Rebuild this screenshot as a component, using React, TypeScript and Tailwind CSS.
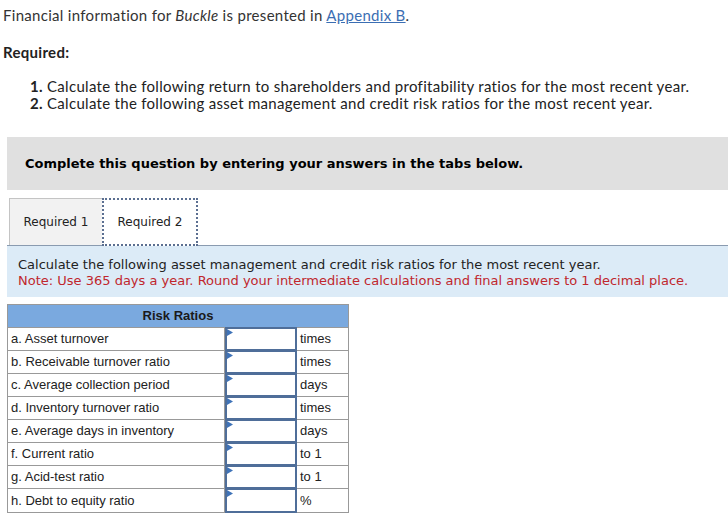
import React from "react";

const rows: [string, string][] = [
  ["a. Asset turnover", "times"],
  ["b. Receivable turnover ratio", "times"],
  ["c. Average collection period", "days"],
  ["d. Inventory turnover ratio", "times"],
  ["e. Average days in inventory", "days"],
  ["f. Current ratio", "to 1"],
  ["g. Acid-test ratio", "to 1"],
  ["h. Debt to equity ratio", "%"],
];

export default function App() {
  return (
    <div className="w-[728px] h-[520px] bg-white overflow-hidden text-[#333]">
      <div className="font-['Lato',sans-serif] text-[15px] tracking-[0.3px]">
        <p className="pl-[3px] pt-[6px] leading-[18px]">
          Financial information for <i>Buckle</i> is presented in{" "}
          <span className="text-[#3b6eb3] underline">Appendix B</span>.
        </p>
        <p className="pl-[3px] mt-[19px] leading-[18px] font-bold text-[#222]">Required:</p>
        <div className="pl-[30px] mt-[17px] leading-[17px] text-[#222]">
          <p>
            <b>1.</b> Calculate the following return to shareholders and profitability ratios for the most recent year.
          </p>
          <p>
            <b>2.</b> Calculate the following asset management and credit risk ratios for the most recent year.
          </p>
        </div>
      </div>

      <div className="font-['DejaVu_Sans',sans-serif]">
        <div className="ml-[7px] mt-[25px] h-[53px] bg-[#e0e0e0] flex items-center pl-[18px]">
          <span className="text-[13px] font-bold text-black">
            Complete this question by entering your answers in the tabs below.
          </span>
        </div>

        <div className="mt-[7px] ml-[7px] flex items-end h-[49px] border-b border-[#8a9bb0]">
          <div className="ml-[2px] w-[93px] h-[47px] bg-[#f2f2f2] border-t border-l border-[#c4c4c4] flex items-center justify-center text-[12px] text-[#222]">
            Required 1
          </div>
          <div className="w-[96px] h-[48px] bg-white border-2 border-dotted border-[#5b6f91] flex items-center justify-center text-[12px] text-[#222] -mb-px">
            Required 2
          </div>
        </div>

        <div className="ml-[7px] h-[51px] bg-[#dcebf7] pl-[11px] pt-[11px] text-[13px] leading-[16px]">
          <p className="text-[#222]">
            Calculate the following asset management and credit risk ratios for the most recent year.
          </p>
          <p className="text-[#c0272d]">
            Note: Use 365 days a year. Round your intermediate calculations and final answers to 1 decimal place.
          </p>
        </div>
      </div>

      <div className="ml-[7px] mt-[7px] w-[342px] border border-[#999] font-['Liberation_Sans',Arial,sans-serif] text-[13px] text-[#222]">
        <div className="h-[23px] bg-[#7aa9df] flex items-center justify-center font-bold text-[13px] text-[#1a1a1a] border-b border-[#999]">
          Risk Ratios
        </div>
        {rows.map(([label, unit], i) => (
          <div
            key={label}
            className={`flex h-[23px] ${i < rows.length - 1 ? "border-b border-[#999]" : ""}`}
          >
            <div className="w-[217px] flex items-center pl-[3px] border-r border-[#999]">{label}</div>
            <div className="relative w-[72px] border-2 border-[#4f6e99] bg-white -my-px">
              <svg className="absolute left-0 top-0" width="6" height="7" viewBox="0 0 6 7">
                <polygon points="0,0 6,3.5 0,7" fill="#3f73b8" />
              </svg>
            </div>
            <div className="flex-1 flex items-center pl-[3px]">{unit}</div>
          </div>
        ))}
      </div>
    </div>
  );
}
